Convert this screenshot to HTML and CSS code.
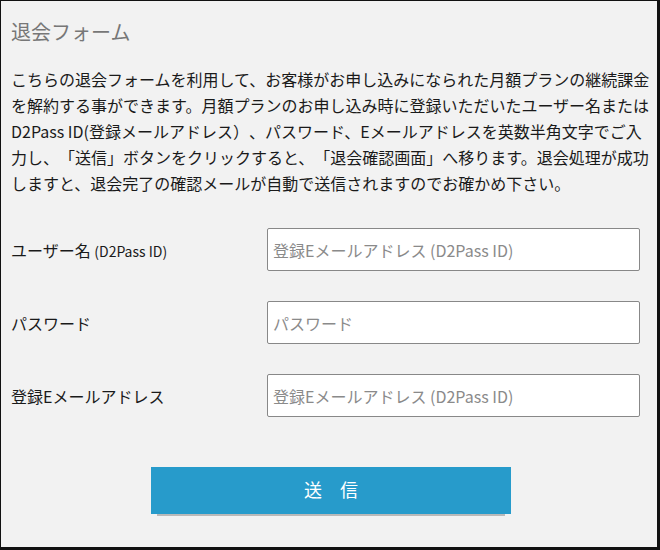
FILE: index.html
```html
<!DOCTYPE html>
<html lang="ja">
<head>
<meta charset="utf-8">
<link rel="stylesheet" href="styles.css">
</head>
<body>
<div class="page">
  <h1 class="title">退会フォーム</h1>
  <p class="intro">こちらの退会フォームを利用して、お客様がお申し込みになられた月額プランの継続課金を解約する事ができます。月額プランのお申し込み時に登録いただいたユーザー名またはD2Pass ID(登録メールアドレス）、パスワード、Eメールアドレスを英数半角文字でご入力し、「送信」ボタンをクリックすると、「退会確認画面」へ移ります。退会処理が成功しますと、退会完了の確認メールが自動で送信されますのでお確かめ下さい。</p>
  <form class="form">
    <div class="row">
      <label class="label">ユーザー名 <span class="small">(D2Pass ID)</span></label>
      <input class="field" type="text" placeholder="登録Eメールアドレス (D2Pass ID)">
    </div>
    <div class="row">
      <label class="label">パスワード</label>
      <input class="field" type="password" placeholder="パスワード">
    </div>
    <div class="row">
      <label class="label">登録Eメールアドレス</label>
      <input class="field" type="text" placeholder="登録Eメールアドレス (D2Pass ID)">
    </div>
    <div class="actions">
      <button class="submit" type="button">送　信</button>
    </div>
  </form>
</div>
</body>
</html>
```
FILE: styles.css
```css
html, body {
  margin: 0;
  padding: 0;
}
body {
  font-family: "Noto Sans CJK JP", "Open Sans", sans-serif;
  color: #1a1a1a;
  text-spacing-trim: space-all;
}
.page {
  box-sizing: border-box;
  width: 660px;
  height: 550px;
  background: #f2f2f2;
  border-style: solid;
  border-color: #111;
  border-width: 1px 3px 3px 1px;
  padding: 16px 5px 0 10px;
}
.title {
  margin: 0;
  font-size: 20px;
  font-weight: normal;
  line-height: 29px;
  color: #777;
}
.intro {
  margin: 20px 0 0;
  font-size: 16px;
  line-height: 26px;
  letter-spacing: 0;
}
.form {
  margin-top: 32px;
  display: flex;
  flex-direction: column;
  gap: 30px;
}
.row {
  display: grid;
  grid-template-columns: 256px 373px;
  align-items: center;
}
.label {
  font-size: 16px;
}
.small {
  font-size: 14px;
}
.field {
  box-sizing: border-box;
  height: 43px;
  width: 373px;
  border: 1px solid #888;
  border-radius: 2px;
  background: #fff;
  padding: 0 5px;
  font-family: "Noto Sans CJK JP", "Open Sans", sans-serif;
  font-size: 16px;
  color: #333;
  outline: none;
}
.field::placeholder {
  color: #8a8a8a;
}
.actions {
  display: flex;
  margin-top: 20px;
  padding-left: 140px;
}
.submit {
  width: 360px;
  height: 47px;
  border: none;
  border-radius: 0;
  background: #279bcb;
  color: #fff;
  font-family: "Noto Sans CJK JP", sans-serif;
  font-size: 18px;
  box-shadow: 0 8px 0 -6px #b9b9b9;
  padding: 0 0 3px;
}
```
